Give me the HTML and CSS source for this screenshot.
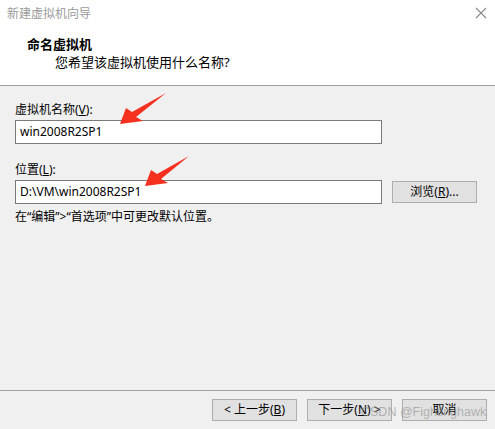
FILE: index.html
```html
<!DOCTYPE html>
<html lang="zh-CN">
<head>
<meta charset="utf-8">
<title>新建虚拟机向导</title>
<link rel="stylesheet" href="styles.css">
</head>
<body>
<div class="window">
  <header class="header">
    <div class="titlebar">
      <span class="title">新建虚拟机向导</span>
      <svg class="close" width="12" height="12" viewBox="0 0 12 12"><path d="M1 1 L11 11 M11 1 L1 11" stroke="#8a8a8a" stroke-width="1.1" fill="none"/></svg>
    </div>
    <div class="heading">命名虚拟机</div>
    <div class="subtitle">您希望该虚拟机使用什么名称?</div>
  </header>
  <main class="main">
    <div class="label">虚拟机名称(<u>V</u>):</div>
    <div class="field">win2008R2SP1</div>
    <div class="label label-loc">位置(<u>L</u>):</div>
    <div class="row">
      <div class="field">D:\VM\win2008R2SP1</div>
      <div class="btn browse">浏览(<u>R</u>)...</div>
    </div>
    <div class="hint">在“编辑”&gt;“首选项”中可更改默认位置。</div>
  </main>
  <footer class="footer">
    <div class="btn">&lt; 上一步(<u>B</u>)</div>
    <div class="btn">下一步(<u>N</u>) &gt;</div>
    <div class="btn">取消</div>
  </footer>
  <div class="watermark">CSDN @Fightinghawk</div>
  <svg class="arrows" width="495" height="429" viewBox="0 0 495 429">
    <polygon points="120,124 126,108 132,112 166,93 136,117 143,121" fill="#f5301e"/>
    <polygon points="145,186 151,170 157,174 189,156 161,179 168,183" fill="#f5301e"/>
  </svg>
</div>
</body>
</html>
```
FILE: styles.css
```css
html, body {
  margin: 0;
  padding: 0;
}
body {
  background: #f0f0f0;
  font-family: "Noto Sans", "Noto Sans CJK SC", sans-serif;
  font-size: 12px;
  color: #000;
}
.window {
  position: relative;
  width: 495px;
  height: 429px;
  display: flex;
  flex-direction: column;
  overflow: hidden;
}
.header {
  background: #fff;
  height: 85px;
  border-bottom: 1px solid #a0a0a0;
  flex: none;
}
.titlebar {
  height: 28px;
  display: flex;
  align-items: center;
  justify-content: space-between;
  padding: 0 8px 0 7px;
}
.title {
  color: #9a9a9a;
  font-size: 12px;
  line-height: 28px;
}
.close {
  display: block;
  margin-top: -2px;
}
.heading {
  margin-top: 8px;
  padding-left: 27px;
  font-weight: bold;
  font-size: 13px;
  line-height: 16px;
}
.subtitle {
  margin-top: 2px;
  padding-left: 55px;
  font-size: 13px;
  line-height: 16px;
}
.main {
  flex: 1;
  padding: 16px 15px 0 15px;
}
.label {
  line-height: 16px;
  margin-bottom: 2px;
}
.label-loc {
  margin-top: 18px;
}
u {
  text-decoration: underline;
  text-underline-offset: 1px;
}
.field {
  box-sizing: border-box;
  width: 367px;
  height: 24px;
  background: #fff;
  border: 1px solid #7a7a7a;
  padding-left: 4px;
  line-height: 22px;
}
.row {
  display: flex;
  align-items: center;
  gap: 10px;
}
.btn {
  box-sizing: border-box;
  width: 85px;
  height: 22px;
  background: #e1e1e1;
  border: 1px solid #adadad;
  text-align: center;
  line-height: 20px;
}
.hint {
  margin-top: 5px;
  line-height: 16px;
}
.footer {
  flex: none;
  border-top: 1px solid #a0a0a0;
  padding: 8px 8px 8px 0;
  display: flex;
  justify-content: flex-end;
  gap: 10px;
}
.watermark {
  position: absolute;
  left: 361px;
  top: 404px;
  font-family: "Liberation Sans", sans-serif;
  font-size: 12.5px;
  line-height: 16px;
  color: rgba(140, 140, 140, 0.6);
  pointer-events: none;
}
.arrows {
  position: absolute;
  left: 0;
  top: 0;
  pointer-events: none;
}
```
